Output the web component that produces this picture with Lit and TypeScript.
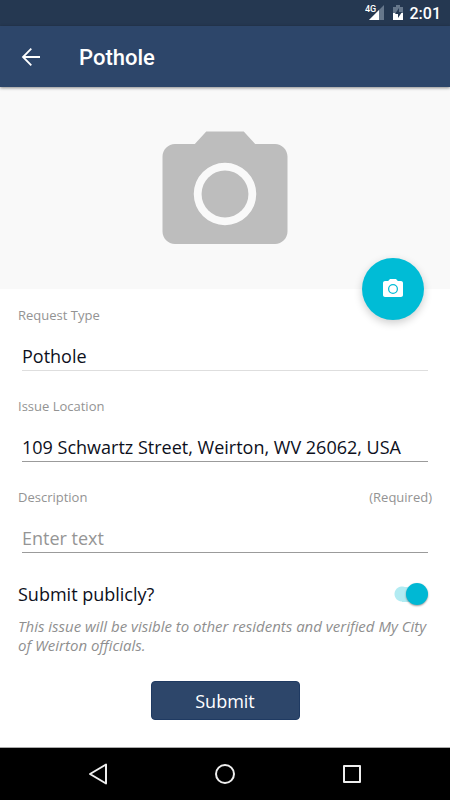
import { LitElement, html, css, svg } from "lit";
import { customElement, property, state } from "lit/decorators.js";

const cameraShape = svg`
  <path fill="currentColor" fill-rule="evenodd"
    d="M9 2 7.17 4H4c-1.1 0-2 .9-2 2v12c0 1.1.9 2 2 2h16c1.1 0 2-.9 2-2V6c0-1.1-.9-2-2-2h-3.17L15 2H9Zm3 15a5 5 0 1 1 0-10 5 5 0 0 1 0 10Z"/>
  <circle fill="currentColor" cx="12" cy="12" r="3.75"/>`;

@customElement("status-bar")
class StatusBar extends LitElement {
  static styles = css`
    :host {
      display: flex;
      align-items: center;
      justify-content: flex-end;
      height: 26px;
      padding-right: 9px;
      background: #253851;
      color: #fff;
      font-family: Roboto, sans-serif;
    }
    .signal { width: 20px; height: 18px; }
    .battery { width: 10px; height: 18px; margin: 0 7px 0 8px; }
    .network { font: 500 9px Roboto, sans-serif; }
    .time { font-size: 16px; font-weight: 500; line-height: 26px; padding-top: 2px; }
  `;
  render() {
    return html`
      <svg class="signal" viewBox="0 0 20 18" role="img" aria-label="4G signal">
        <path d="M19 1v15H4Z" fill="#66778b" />
        <path d="M14 6v10H4Z" fill="#fff" />
        <path d="M0 0h10v9H0Z" fill="#253851" />
        <text class="network" x="0" y="8" fill="#fff">4G</text>
      </svg>
      <svg class="battery" viewBox="0 0 10 18" role="img" aria-label="Battery">
        <path d="M0 3h3V1h4v2h3v6H0Z" fill="#66778b" />
        <path d="M0 9h10v7H0Z" fill="#fff" />
        <path d="M6 4 2 10h3v4l4-6H6Z" fill="#253851" />
      </svg>
      <span class="time">2:01</span>
    `;
  }
}

@customElement("app-bar")
class AppBar extends LitElement {
  @property() heading = "";
  static styles = css`
    :host {
      display: flex;
      align-items: center;
      height: 61px;
      padding: 0 18px;
      background: #2d466a;
      color: #fff;
      box-shadow: 0 1px 3px rgba(0, 0, 0, 0.45);
      z-index: 1;
    }
    .back {
      display: flex;
      padding: 0;
      border: 0;
      background: none;
      color: inherit;
    }
    .back svg { width: 26px; height: 26px; }
    h1 {
      margin: 0 0 0 35px;
      font: 500 22px/30px Roboto, sans-serif;
      padding-top: 2px;
    }
  `;
  render() {
    return html`
      <button class="back" aria-label="Back">
        <svg viewBox="0 0 26 26">
          <path fill="none" stroke="currentColor" stroke-width="1.8" d="M22 13H5.5M13.3 4.7 5 13l8.3 8.3" />
        </svg>
      </button>
      <h1>${this.heading}</h1>
    `;
  }
}

@customElement("photo-panel")
class PhotoPanel extends LitElement {
  static styles = css`
    :host {
      display: flex;
      position: relative;
      box-sizing: border-box;
      align-items: center;
      justify-content: center;
      height: 202px;
      padding-top: 12px;
      background: #f9f9f9;
    }
    .placeholder { width: 150px; height: 150px; color: #bdbdbd; }
    .fab {
      position: absolute;
      right: 26px;
      bottom: -31px;
      display: flex;
      align-items: center;
      justify-content: center;
      width: 62px;
      height: 62px;
      padding: 0;
      border: 0;
      border-radius: 50%;
      background: #00bcd6;
      color: #fff;
      box-shadow: 0 3px 8px rgba(0, 0, 0, 0.2);
    }
    .fab svg { width: 24px; height: 24px; }
  `;
  render() {
    return html`
      <svg class="placeholder" viewBox="0 0 24 24" aria-hidden="true">${cameraShape}</svg>
      <button class="fab" aria-label="Add photo">
        <svg viewBox="0 0 24 24">${cameraShape}</svg>
      </button>
    `;
  }
}

@customElement("form-field")
class FormField extends LitElement {
  @property() label = "";
  @property() note = "";
  @property() value = "";
  @property() placeholder = "";
  @property({ type: Boolean, reflect: true }) fixed = false;
  static styles = css`
    :host { display: block; height: 91px; }
    .caption {
      display: flex;
      justify-content: space-between;
      color: #939393;
      font-size: 13px;
      line-height: 18px;
    }
    .field { padding: 0 4px; margin-top: 14px; }
    input {
      display: block;
      box-sizing: border-box;
      width: 100%;
      height: 33px;
      padding: 4px 0 0;
      border: 0;
      border-bottom: 1px solid #9b9b9b;
      border-radius: 0;
      background: none;
      color: #0d101c;
      font: inherit;
      outline: none;
    }
    input::placeholder { color: #959595; opacity: 1; }
    :host([fixed]) input { border-bottom-color: #dedede; }
  `;
  render() {
    return html`
      <div class="caption">
        <label for="entry">${this.label}</label>
        <span>${this.note}</span>
      </div>
      <div class="field">
        <input id="entry" type="text" .value=${this.value}
          placeholder=${this.placeholder} ?readonly=${this.fixed} />
      </div>
    `;
  }
}

@customElement("nav-bar")
class NavBar extends LitElement {
  static styles = css`
    :host {
      display: flex;
      align-items: center;
      justify-content: center;
      gap: 101px;
      height: 53px;
      background: #000;
      border-top: 1px solid #aaa;
      box-sizing: border-box;
    }
    button { display: flex; padding: 0; border: 0; background: none; }
    svg { width: 26px; height: 26px; fill: none; stroke: #eee; stroke-width: 2; stroke-linejoin: round; }
  `;
  render() {
    return html`
      <button aria-label="Back"><svg viewBox="0 0 26 26"><path d="M21 3.5v19L5 13Z" /></svg></button>
      <button aria-label="Home"><svg viewBox="0 0 26 26"><circle cx="13" cy="13" r="9" /></svg></button>
      <button aria-label="Recent apps"><svg viewBox="0 0 26 26"><path d="M5 5h16v16H5Z" /></svg></button>
    `;
  }
}

@customElement("app-root")
class AppRoot extends LitElement {
  @state() isPublic = true;
  static styles = css`
    :host {
      display: flex;
      flex-direction: column;
      min-height: 100vh;
      background: #fff;
      color: #0d101c;
      font: 18px/24px "Open Sans", sans-serif;
    }
    form {
      display: flex;
      flex-direction: column;
      flex: 1;
      padding: 17px 18px 0;
    }
    .public {
      display: flex;
      align-items: center;
      justify-content: space-between;
      height: 30px;
      padding-right: 4px;
    }
    .switch {
      appearance: none;
      display: flex;
      align-items: center;
      justify-content: flex-start;
      width: 34px;
      height: 22px;
      margin: 0;
      background: linear-gradient(#dadada, #dadada) center / 34px 15px no-repeat;
      border-radius: 11px;
    }
    .switch::before {
      content: "";
      width: 22px;
      height: 22px;
      border-radius: 50%;
      background: #fafafa;
      box-shadow: 0 1px 2px rgba(0, 0, 0, 0.4);
    }
    .switch:checked {
      justify-content: flex-end;
      background: radial-gradient(circle at 8px 11px, #b2ebf2 7px, transparent 8px),
        linear-gradient(#b2ebf2, #b2ebf2) 8px center / 20px 15px no-repeat;
    }
    .switch:checked::before { background: #00b8d4; }
    .hint {
      margin: 8px 0 0;
      color: #8f8f8f;
      font-size: 15px;
      line-height: 19px;
      font-style: italic;
    }
    .submit {
      align-self: center;
      width: 149px;
      height: 39px;
      margin: 26px 0 24px;
      padding: 0;
      border: 1px solid #1f3a62;
      border-radius: 4px;
      background: #2d466a;
      color: #fff;
      font: inherit;
    }
  `;
  render() {
    return html`
      <status-bar></status-bar>
      <app-bar heading="Pothole"></app-bar>
      <photo-panel></photo-panel>
      <form @submit=${(e: Event) => e.preventDefault()}>
        <form-field label="Request Type" value="Pothole" fixed></form-field>
        <form-field label="Issue Location" value="109 Schwartz Street, Weirton, WV 26062, USA"></form-field>
        <form-field label="Description" note="(Required)" placeholder="Enter text"></form-field>
        <div class="public">
          <label for="public">Submit publicly?</label>
          <input id="public" class="switch" type="checkbox" role="switch" .checked=${this.isPublic}
            @change=${(e: Event) => (this.isPublic = (e.target as HTMLInputElement).checked)} />
        </div>
        <p class="hint">This issue will be visible to other residents and verified My City of Weirton officials.</p>
        <button class="submit" type="submit">Submit</button>
      </form>
      <nav-bar></nav-bar>
    `;
  }
}
